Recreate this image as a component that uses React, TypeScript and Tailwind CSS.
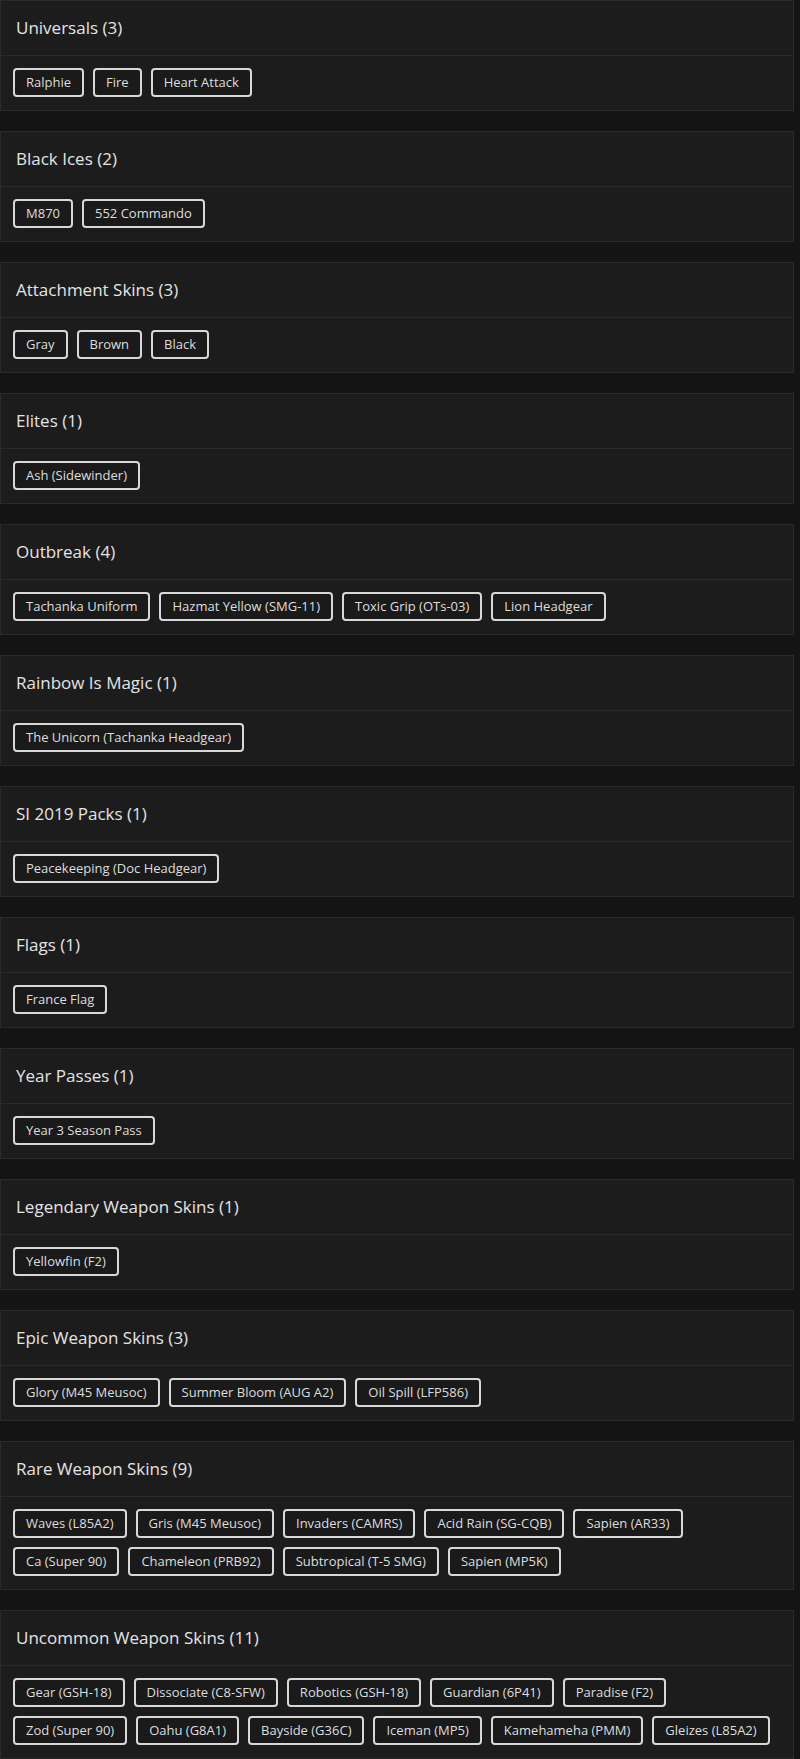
import React from 'react';

type Group = { title: string; items: string[] };

const groups: Group[] = [
  { title: 'Universals', items: ['Ralphie', 'Fire', 'Heart Attack'] },
  { title: 'Black Ices', items: ['M870', '552 Commando'] },
  { title: 'Attachment Skins', items: ['Gray', 'Brown', 'Black'] },
  { title: 'Elites', items: ['Ash (Sidewinder)'] },
  { title: 'Outbreak', items: ['Tachanka Uniform', 'Hazmat Yellow (SMG-11)', 'Toxic Grip (OTs-03)', 'Lion Headgear'] },
  { title: 'Rainbow Is Magic', items: ['The Unicorn (Tachanka Headgear)'] },
  { title: 'SI 2019 Packs', items: ['Peacekeeping (Doc Headgear)'] },
  { title: 'Flags', items: ['France Flag'] },
  { title: 'Year Passes', items: ['Year 3 Season Pass'] },
  { title: 'Legendary Weapon Skins', items: ['Yellowfin (F2)'] },
  { title: 'Epic Weapon Skins', items: ['Glory (M45 Meusoc)', 'Summer Bloom (AUG A2)', 'Oil Spill (LFP586)'] },
  {
    title: 'Rare Weapon Skins',
    items: [
      'Waves (L85A2)',
      'Gris (M45 Meusoc)',
      'Invaders (CAMRS)',
      'Acid Rain (SG-CQB)',
      'Sapien (AR33)',
      'Ca (Super 90)',
      'Chameleon (PRB92)',
      'Subtropical (T-5 SMG)',
      'Sapien (MP5K)',
    ],
  },
  {
    title: 'Uncommon Weapon Skins',
    items: [
      'Gear (GSH-18)',
      'Dissociate (C8-SFW)',
      'Robotics (GSH-18)',
      'Guardian (6P41)',
      'Paradise (F2)',
      'Zod (Super 90)',
      'Oahu (G8A1)',
      'Bayside (G36C)',
      'Iceman (MP5)',
      'Kamehameha (PMM)',
      'Gleizes (L85A2)',
    ],
  },
];

// split rows the way the reference wraps them
const breaks: Record<string, number> = {
  'Rare Weapon Skins': 5,
  'Uncommon Weapon Skins': 5,
};

function Chip({ label }: { label: string }) {
  return (
    <span className="h-[29px] flex items-center px-[11px] rounded-[4px] border-2 border-[#d8d8d8] text-[13px] text-[#dedede] bg-[#1a1a1a] whitespace-nowrap">
      {label}
    </span>
  );
}

function GroupCard({ group }: { group: Group }) {
  const cut = breaks[group.title];
  const rows = cut ? [group.items.slice(0, cut), group.items.slice(cut)] : [group.items];
  return (
    <section className="w-[794px] border border-[#2a2a2a] bg-[#1c1c1c]">
      <h2 className="h-[55px] flex items-center px-[15px] text-[17px] font-medium text-[#e4e4e4] border-b border-[#2a2a2a]">
        {group.title} ({group.items.length})
      </h2>
      <div className="flex flex-col gap-[9px] px-[12px] pt-[12px] pb-[13px]">
        {rows.map((row, i) => (
          <div key={i} className="flex gap-[9px]">
            {row.map((it) => (
              <Chip key={it} label={it} />
            ))}
          </div>
        ))}
      </div>
    </section>
  );
}

export default function App() {
  return (
    <div
      className="min-h-[1759px] bg-[#141414] flex flex-col gap-[20px]"
      style={{ fontFamily: '"Open Sans", "Noto Sans", sans-serif' }}
    >
      {groups.map((g) => (
        <GroupCard key={g.title} group={g} />
      ))}
    </div>
  );
}
